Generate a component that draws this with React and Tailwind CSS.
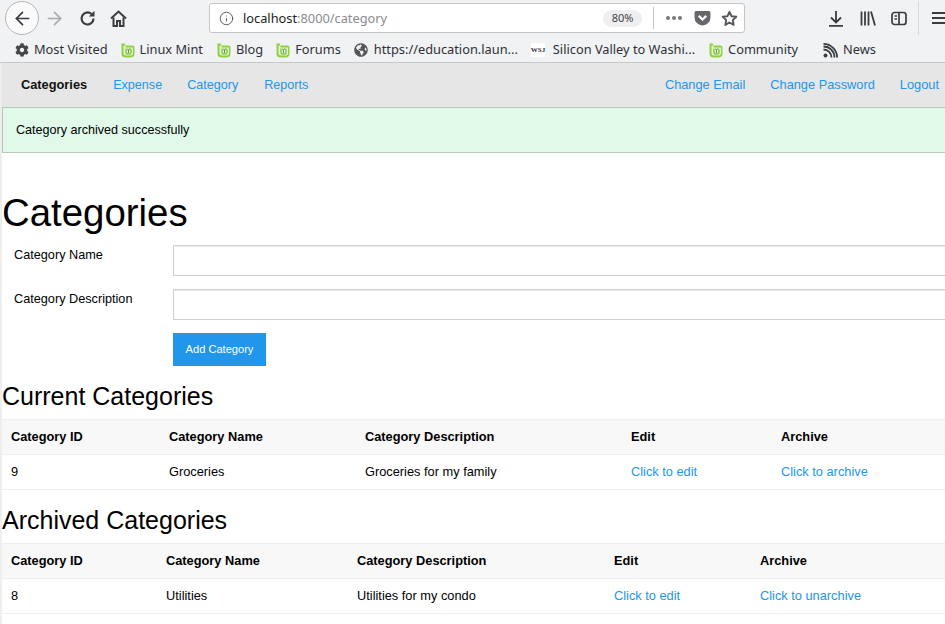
import React from 'react';
import { ArrowLeft, ArrowRight, Info } from 'lucide-react';
import { FaCog, FaGlobeAmericas } from 'react-icons/fa';

const MintIcon = () => (
    <svg width="14" height="15" viewBox="0 0 14 15" className="shrink-0">
        <path d="M.5 .5h3.500v2h7.500a2 2 0 0 1 2 2v6a4 4 0 0 1-4 4h-5a4 4 0 0 1-4-4z" fill="#8fd13f" />
        <path d="M2.500 2.500v7.500a2.500 2.500 0 0 0 2.500 2.500h4.500a2.500 2.500 0 0 0 2.500-2.500V4.500H4.500v-2z" fill="#e4f4cc" />
        <path d="M5 5.500v4.500a1 1 0 0 0 1 1h3a1 1 0 0 0 1-1V7a1 1 0 0 0-1-1 1 1 0 0 0-1.500.5 1 1 0 0 0-1.500.2M7.500 6.500V10" fill="none" stroke="#5fa82a" strokeWidth="1" />
    </svg>
);

const RssIcon = () => (
    <svg width="15" height="15" viewBox="0 0 15 15" className="shrink-0" fill="none" stroke="#3c3d41" strokeWidth="1.800">
        <circle cx="2.500" cy="12.500" r="2" fill="#3c3d41" stroke="none" />
        <path d="M.5 6.500a8 8 0 0 1 8 8" />
        <path d="M.5 3.500a11 11 0 0 1 11 11" />
        <path d="M.5 .9a13.600 13.600 0 0 1 13.600 13.600" />
    </svg>
);

const Bookmark = ({ icon, label, className = '' }) => (
    <div className={`flex items-center gap-[5px] ${className}`}>
        {icon}
        <span>{label}</span>
    </div>
);

const BrowserChrome = () => (
    <div className="h-[63px] bg-[#f1f2f4] border-b border-[#c8c9cb] shrink-0 font-['Noto_Sans',sans-serif] text-[#2f3136]">
        <div className="h-[36px] flex items-center">
            <div className="ml-[5px] w-[34px] h-[34px] rounded-full border border-[#b4b5b7] bg-[#fafafb] flex items-center justify-center shrink-0">
                <ArrowLeft size={21} strokeWidth={1.9} color="#38383d" />
            </div>
            <ArrowRight size={21} strokeWidth={1.9} color="#a9aaac" className="ml-[5px] shrink-0" />
            <svg width="17" height="17" viewBox="0 0 17 17" className="ml-[14px] shrink-0" fill="none" stroke="#3c3d41" strokeWidth="2.200">
                <path d="M14.500 8.500a6 6 0 1 1-2-4.500" />
                <path d="M15.500 .8v5.700H9.800z" fill="#3c3d41" stroke="none" />
            </svg>
            <svg width="17" height="17" viewBox="0 0 17 17" className="ml-[14px] shrink-0" fill="none" stroke="#3c3d41" strokeWidth="2">
                <path d="M1 8.500 8.500 1.500l7.500 7" />
                <path d="M3.500 7.500v8.500h3.500v-5h3v5h3.500V7.500" />
            </svg>
            <div className="ml-[82px] w-[536px] h-[30px] bg-white border border-[#c4c5c7] rounded-[3px] flex items-center shrink-0">
                <Info size={15} strokeWidth={1.500} color="#55565a" className="ml-[9px]" />
                <div className="ml-[9px] text-[12.800px] leading-none"><span className="text-[#222]">localhost</span><span className="text-[#8a8b8e]">:8000/category</span></div>
                <div className="ml-[216px] w-[39px] h-[17px] rounded-full bg-[#efeff1] text-[11px] flex items-center justify-center text-[#444] shrink-0">80%</div>
                <div className="ml-[11px] w-px h-[22px] bg-[#c4c5c7] shrink-0" />
                <div className="ml-[12px] flex gap-[2px] shrink-0">
                    <span className="w-[4px] h-[4px] rounded-full bg-[#77787c]" />
                    <span className="w-[4px] h-[4px] rounded-full bg-[#77787c]" />
                    <span className="w-[4px] h-[4px] rounded-full bg-[#77787c]" />
                </div>
                <svg width="17" height="16" viewBox="0 0 16 15" className="ml-[12px] shrink-0">
                    <path d="M2 1h12a1.500 1.500 0 0 1 1.500 1.500V7A7.500 7.500 0 0 1 .5 7V2.500A1.500 1.500 0 0 1 2 1z" fill="#66676b" />
                    <path d="M4.500 5.500 8 9l3.500-3.500" fill="none" stroke="#fff" strokeWidth="2" />
                </svg>
                <svg width="17" height="17" viewBox="0 0 17 17" className="ml-[10px] shrink-0" fill="none" stroke="#55565a" strokeWidth="1.900" strokeLinejoin="round">
                    <path d="M8.500 1.800l2 4.400 4.800.6-3.500 3.300.9 4.800-4.200-2.400-4.200 2.400.9-4.800-3.500-3.300 4.800-.6z" />
                </svg>
            </div>
            <svg width="16" height="17" viewBox="0 0 16 17" className="ml-[83px] shrink-0" fill="none" stroke="#3c3d41" strokeWidth="1.800">
                <path d="M8 1v11M3 7.500l5 5 5-5M1 15.800h14" />
            </svg>
            <svg width="16" height="15" viewBox="0 0 16 15" className="ml-[16px] shrink-0" fill="none" stroke="#3c3d41" strokeWidth="1.800">
                <path d="M1.500 .5v14M5 .5v14M8.500 .5v14M11 .5l4 14" />
            </svg>
            <svg width="16" height="15" viewBox="0 0 16 15" className="ml-[15px] shrink-0" fill="none" stroke="#3c3d41" strokeWidth="1.700">
                <rect x="1" y="1.500" width="14" height="12" rx="2.500" />
                <path d="M8 1.500v12M3.500 5h2.500M3.500 8h2.500" />
            </svg>
            <div className="ml-[11px] w-px h-[34px] bg-[#d8d9db] shrink-0" />
            <div className="ml-[13px] flex flex-col gap-[3px] shrink-0">
                <span className="w-[16px] h-[2px] bg-[#3c3d41]" />
                <span className="w-[16px] h-[2px] bg-[#3c3d41]" />
                <span className="w-[16px] h-[2px] bg-[#3c3d41]" />
            </div>
        </div>
        <div className="h-[26px] pt-[2px] flex items-center text-[12.800px] whitespace-nowrap overflow-hidden">
            <Bookmark className="ml-[15px]" icon={<FaCog size={14} color="#45464a" />} label="Most Visited" />
            <Bookmark className="ml-[13px]" icon={<MintIcon />} label="Linux Mint" />
            <Bookmark className="ml-[14px]" icon={<MintIcon />} label="Blog" />
            <Bookmark className="ml-[13px]" icon={<MintIcon />} label="Forums" />
            <Bookmark className="ml-[13px] gap-[6px]" icon={<FaGlobeAmericas size={14} color="#55565a" />} label="https://education.laun..." />
            <Bookmark className="ml-[13px] gap-[8px]" icon={<span className="w-[14px] h-[14px] bg-white text-[7px] leading-[14px] font-bold text-center font-['Liberation_Serif',serif]">WSJ</span>} label="Silicon Valley to Washi..." />
            <Bookmark className="ml-[14px]" icon={<MintIcon />} label="Community" />
            <Bookmark className="ml-[25px]" icon={<RssIcon />} label="News" />
        </div>
    </div>
);

const NavLink = ({ children, className = '' }) => (
    <a className={`text-[#2196eb] ${className}`}>{children}</a>
);

const CategoryTable = ({ cols, name, description, id, action }) => (
    <table className="w-[943px] table-fixed border-collapse text-[12.800px]">
        <colgroup>
            {cols.map((w, i) => <col key={i} style={{ width: w }} />)}
        </colgroup>
        <thead>
            <tr className="h-[35px] bg-[#f8f8f8] border-y border-[#eeeeee] font-bold text-left">
                <th className="pl-[9px]">Category ID</th>
                <th className="pl-[9px]">Category Name</th>
                <th className="pl-[9px]">Category Description</th>
                <th className="pl-[9px]">Edit</th>
                <th className="pl-[9px]">Archive</th>
            </tr>
        </thead>
        <tbody>
            <tr className="h-[35px] border-b border-[#eeeeee]">
                <td className="pl-[9px]">{id}</td>
                <td className="pl-[9px]">{name}</td>
                <td className="pl-[9px]">{description}</td>
                <td className="pl-[9px]"><NavLink>Click to edit</NavLink></td>
                <td className="pl-[9px]"><NavLink>{action}</NavLink></td>
            </tr>
        </tbody>
    </table>
);

const FormRow = ({ label }) => (
    <div className="flex h-[31px]">
        <label className="w-[171px] pl-[12px] pt-[2px] text-[12.700px] leading-[16px] shrink-0">{label}</label>
        <input className="flex-1 min-w-0 h-[31px] bg-white border border-[#d0d0d0] border-r-0 shadow-[inset_0_1px_1px_rgba(0,0,0,0.08)]" />
    </div>
);

export default function App() {
    return (
        <div className="w-[945px] h-[624px] overflow-hidden flex flex-col bg-white text-black font-['Liberation_Sans',Arial,sans-serif]">
            <BrowserChrome />
            <div className="flex-1 min-h-0 border-l-2 border-[#eeeeee] overflow-hidden">
                <nav className="h-[44px] bg-[#e6e6e6] flex items-center text-[12.600px]">
                    <b className="ml-[19px] text-[12.800px] text-[#111]">Categories</b>
                    <NavLink className="ml-[26px]">Expense</NavLink>
                    <NavLink className="ml-[25px]">Category</NavLink>
                    <NavLink className="ml-[26px]">Reports</NavLink>
                    <NavLink className="ml-auto text-[12.800px]">Change Email</NavLink>
                    <NavLink className="ml-[25px] text-[12.800px]">Change Password</NavLink>
                    <NavLink className="ml-[25px] mr-[6px] text-[12.800px]">Logout</NavLink>
                </nav>
                <div className="h-[46px] bg-[#e0f9e9] border border-[#b5c9bb] border-r-0 flex items-center pl-[13px] text-[12.580px]">
                    Category archived successfully
                </div>
                <h1 className="mt-[36px] text-[38.400px] leading-[48px] font-normal">Categories</h1>
                <div className="mt-[8px] flex flex-col gap-[13px]">
                    <FormRow label="Category Name" />
                    <FormRow label="Category Description" />
                </div>
                <button className="block ml-[171px] mt-[13px] w-[93px] h-[33px] bg-[#2196eb] text-white text-[11.100px]">Add Category</button>
                <h2 className="mt-[15px] text-[25px] leading-[30px] font-normal">Current Categories</h2>
                <div className="mt-[8px]">
                    <CategoryTable cols={[158, 196, 266, 150, 173]} id="9" name="Groceries" description="Groceries for my family" action="Click to archive" />
                </div>
                <h2 className="mt-[15px] text-[25px] leading-[30px] font-normal">Archived Categories</h2>
                <div className="mt-[8px]">
                    <CategoryTable cols={[155, 191, 257, 146, 194]} id="8" name="Utilities" description="Utilities for my condo" action="Click to unarchive" />
                </div>
            </div>
        </div>
    );
}
